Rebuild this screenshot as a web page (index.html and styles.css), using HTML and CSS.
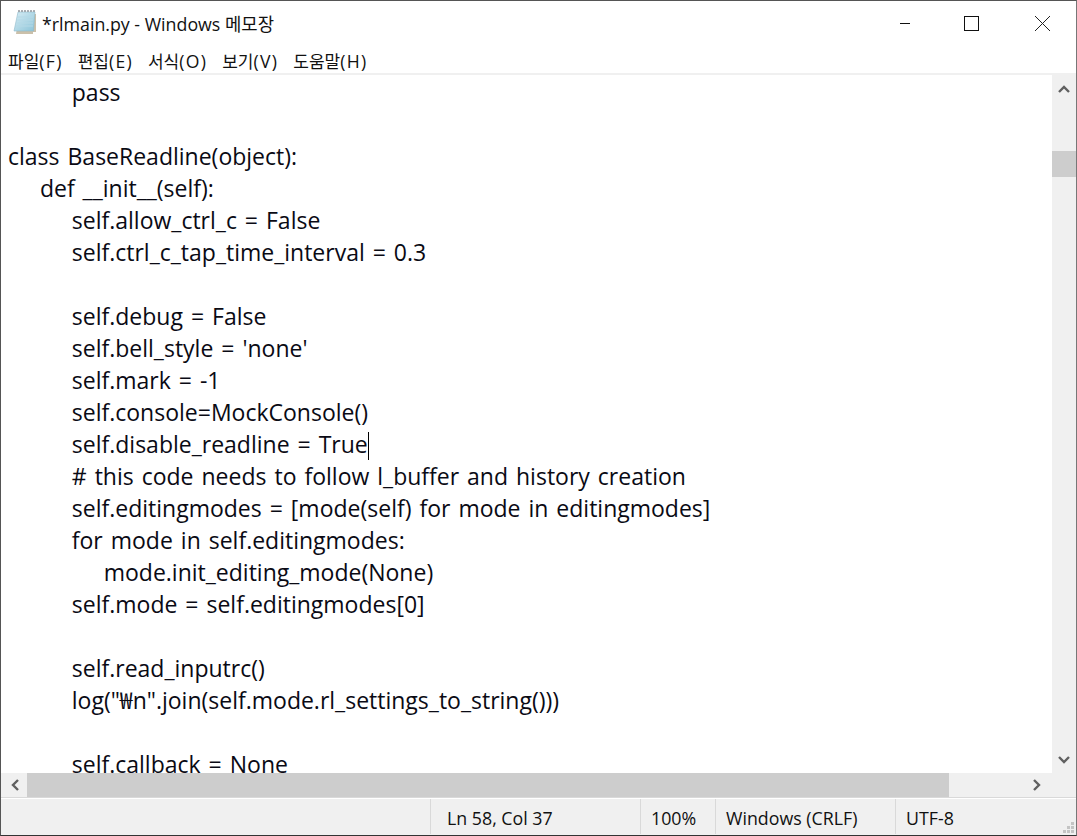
FILE: index.html
```html
<!DOCTYPE html>
<html lang="ko">
<head>
<meta charset="utf-8">
<title>rlmain.py - Windows 메모장</title>
<link rel="stylesheet" href="styles.css">
</head>
<body>
<div class="window">
  <header class="titlebar">
    <svg class="app-icon" width="24" height="26" viewBox="0 0 24 26">
      <defs>
        <linearGradient id="page" x1="0" y1="0" x2="1" y2="1">
          <stop offset="0" stop-color="#d8edf5"/>
          <stop offset="1" stop-color="#8cc4d8"/>
        </linearGradient>
      </defs>
      <path d="M6 5 H23 V23 H20 V25 L3 25 Z" fill="#b9ab8e" opacity=".75"/>
      <path d="M5 3 H22 L20.5 22 H1 Z" fill="url(#page)" stroke="#8fb9c9" stroke-width=".6"/>
      <path d="M4 8H20M3.6 11H20M3.3 14H20M3 17H20" stroke="#b5d9e6" stroke-width="1"/>
      <path d="M6 3V1M9 3V1M12 3V1M15 3V1M18 3V1M21 3V1" stroke="#8a8f96" stroke-width="1.4"/>
    </svg>
    <span class="title">*rlmain.py - Windows 메모장</span>
    <div class="controls">
      <svg class="ctl" width="46" height="44" viewBox="0 0 46 44"><path d="M12 22.5H22" stroke="#111" fill="none"/></svg>
      <svg class="ctl" width="72" height="44" viewBox="0 0 72 44"><rect x="30.5" y="15.5" width="14" height="14" stroke="#111" fill="none"/></svg>
      <svg class="ctl" width="70" height="44" viewBox="0 0 70 44"><path d="M29 15L44 30M44 15L29 30" stroke="#222" fill="none"/></svg>
    </div>
  </header>
  <nav class="menubar">
    <span class="menu">파일<small>(F)</small></span>
    <span class="menu">편집<small>(E)</small></span>
    <span class="menu">서식<small>(O)</small></span>
    <span class="menu">보기<small>(V)</small></span>
    <span class="menu">도움말<small>(H)</small></span>
  </nav>
  <main class="client">
    <div class="editor-row">
      <pre class="editor">        pass

class BaseReadline(object):
    def __init__(self):
        self.allow_ctrl_c = False
        self.ctrl_c_tap_time_interval = 0.3

        self.debug = False
        self.bell_style = 'none'
        self.mark = -1
        self.console=MockConsole()
        self.disable_readline = True<i class="caret"></i>
        # this code needs to follow l_buffer and history creation
        self.editingmodes = [mode(self) for mode in editingmodes]
        for mode in self.editingmodes:
            mode.init_editing_mode(None)
        self.mode = self.editingmodes[0]

        self.read_inputrc()
        log("₩n".join(self.mode.rl_settings_to_string()))

        self.callback = None</pre>
      <div class="vscroll">
        <svg class="arrow" width="24" height="26" viewBox="0 0 24 26"><path d="M7 17L12 12L17 17" stroke="#606060" stroke-width="2.4" fill="none"/></svg>
        <div class="vtrack"><div class="vthumb"></div></div>
        <svg class="arrow" width="24" height="26" viewBox="0 0 24 26"><path d="M7 10L12 15L17 10" stroke="#606060" stroke-width="2.4" fill="none"/></svg>
      </div>
    </div>
    <div class="hscroll">
      <svg class="arrow" width="26" height="24" viewBox="0 0 26 24"><path d="M17 7L12 12L17 17" stroke="#606060" stroke-width="2.4" fill="none"/></svg>
      <div class="hthumb"></div>
      <svg class="arrow harrow-right" width="26" height="24" viewBox="0 0 26 24"><path d="M10 7L15 12L10 17" stroke="#606060" stroke-width="2.4" fill="none"/></svg>
    </div>
    <footer class="statusbar">
      <div class="cell cell-empty"></div>
      <div class="cell cell-pos">Ln 58, Col 37</div>
      <div class="cell cell-zoom">100%</div>
      <div class="cell cell-eol">Windows (CRLF)</div>
      <div class="cell cell-enc">UTF-8</div>
      <svg class="grip" width="14" height="14" viewBox="0 0 14 14" fill="#c4c4c4">
        <rect x="9" y="1" width="3" height="3"/><rect x="5" y="5" width="3" height="3"/><rect x="9" y="5" width="3" height="3"/>
        <rect x="1" y="9" width="3" height="3"/><rect x="5" y="9" width="3" height="3"/><rect x="9" y="9" width="3" height="3"/>
      </svg>
    </footer>
  </main>
</div>
</body>
</html>
```
FILE: styles.css
```css
* { box-sizing: border-box; }
html, body { margin: 0; padding: 0; background: #fff; }
body { width: 1077px; height: 836px; overflow: hidden; font-family: "Open Sans", "Noto Sans CJK KR", sans-serif; color: #000; }
.window { width: 1077px; height: 836px; display: flex; flex-direction: column; border: 1px solid #555; border-right-color: #777; border-bottom-color: #333; background: #fff; }
.titlebar { height: 43px; display: flex; align-items: center; flex: none; padding-left: 12px; }
.app-icon { flex: none; margin-top: -2px; }
.title { font-size: 17.8px; margin-left: 5px; color: #111; font-family: "Open Sans", "Noto Sans CJK KR", sans-serif; }
.controls { margin-left: auto; display: flex; }
.ctl { display: block; }
.menubar { height: 29px; flex: none; display: flex; gap: 15px; padding-left: 7px; padding-top: 3px; align-items: center; font-size: 17px; font-family: "Noto Sans CJK KR", sans-serif; }
.menu { white-space: nowrap; color: #111; }
.menu small { font-family: "Open Sans", sans-serif; font-size: 17.6px; letter-spacing: 1.3px; }
.client { flex: 1; min-height: 0; display: flex; flex-direction: column; border-top: 2px solid #f0f0f0; }
.editor-row { flex: 1; min-height: 0; display: flex; }
.editor { flex: 1; margin: 0; padding: 1px 0 0 7px; overflow: hidden; font-family: "Open Sans", "Noto Sans CJK KR", sans-serif; font-size: 23px; word-spacing: 2px; line-height: 32px; white-space: pre; color: #0a0a14; }
.caret { display: inline-block; width: 0; height: 28px; border-left: 1px solid #000; vertical-align: -7px; }
.vscroll { width: 24px; flex: none; background: #f0f0f0; display: flex; flex-direction: column; }
.vtrack { flex: 1; }
.vthumb { height: 26px; margin-top: 50px; background: #cdcdcd; }
.arrow { display: block; flex: none; }
.hscroll { height: 25px; flex: none; background: #f0f0f0; display: flex; padding-right: 2px; border-bottom: 1px solid #d9d9d9; }
.hthumb { width: 922px; background: #cdcdcd; }
.harrow-right { margin-left: auto; margin-right: 24px; }
.statusbar { height: 37px; flex: none; background: #f0f0f0; display: flex; font-size: 17.8px; line-height: 39px; border-top: 1px solid #fff; position: relative; color: #111; }
.cell { border-left: 1px solid #d9d9d9; padding-left: 10px; white-space: nowrap; margin-bottom: 1px; }
.cell-empty { width: 429px; border-left: 0; flex: none; }
.cell-pos { width: 210px; flex: none; padding-left: 16px; }
.cell-zoom { width: 75px; flex: none; }
.cell-eol { width: 180px; flex: none; }
.cell-enc { flex: 1; }
.grip { position: absolute; right: 0; bottom: 0; }
```
